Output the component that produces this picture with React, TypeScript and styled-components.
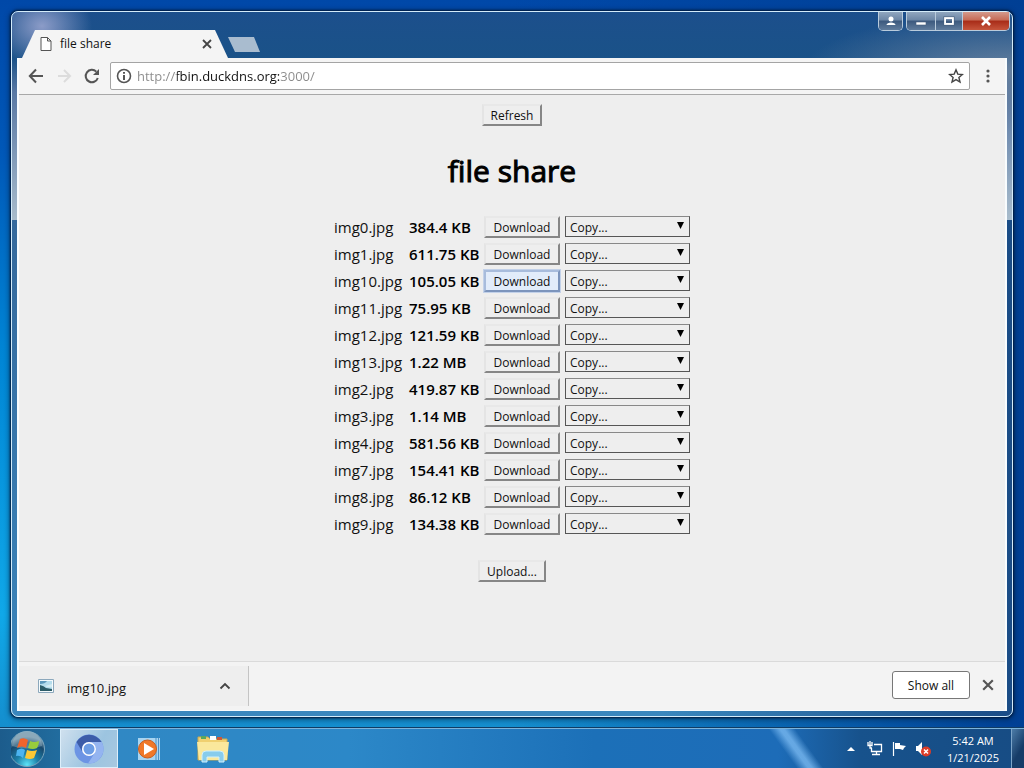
import React from "react";
import styled, { createGlobalStyle, css } from "styled-components";

const GlobalStyle = createGlobalStyle`
  *, *::before, *::after { box-sizing: border-box; }
  body { margin: 0; font-family: "Open Sans", "Noto Sans", sans-serif; color: #111; }
  button, input, select { font: inherit; color: inherit; }
`;

const bareButton = css`
  display: flex;
  align-items: center;
  justify-content: center;
  padding: 0;
  border: 0;
  background: none;
`;

const Desktop = styled.div`
  min-height: 100vh;
  display: flex;
  flex-direction: column;
  overflow: hidden;
  background:
    linear-gradient(90deg, transparent 50%, #003f94 100%),
    linear-gradient(180deg, #0048a8 0%, #0058b8 20%, #0084d4 45%, #10a8e8 80%, #1684c4 100%);
`;

const BrowserWindow = styled.main`
  flex: 1;
  display: flex;
  flex-direction: column;
  margin: 11px;
  padding: 0 5px 5px;
  border: 1px solid #d4ecfa;
  border-radius: 7px;
  background:
    linear-gradient(90deg, transparent 65%, #1a4c86 100%) 0 208px / 100% 100% no-repeat,
    linear-gradient(180deg, #35699c, #3c94cc) 0 208px / 100% 100% no-repeat,
    radial-gradient(ellipse 50px 40px at 30px 14px, #8c9cc8 0%, transparent 100%),
    radial-gradient(ellipse 210px 60px at 100% 60px, #68819f 0%, transparent 100%),
    linear-gradient(180deg, #1c4f8c 0, #1a5288 46px, #5878a4 80px, #a8bccc 208px);
  box-shadow: 0 0 2px 1px #001c40, 0 1px 5px 2px #00204088;
`;

const TitleBar = styled.header`
  height: 46px;
  display: flex;
  justify-content: space-between;
  align-items: flex-start;
  margin-right: -3px;
`;

const TabStrip = styled.div`
  display: flex;
  align-items: flex-end;
  height: 46px;
  padding-left: 5px;
`;

const Tab = styled.div`
  width: 206px;
  height: 28px;
  display: flex;
  align-items: center;
  padding: 0 15px 0 18px;
  gap: 8px;
  background: #f4f4f4;
  clip-path: polygon(13px 0, 193px 0, 206px 100%, 0 100%);
  font-size: 12px;
  line-height: 16px;
`;

const TabTitle = styled.span`
  flex: 1;
`;

const TabClose = styled.button`
  ${bareButton}
  width: 12px;
  height: 12px;
`;

const NewTab = styled.button`
  ${bareButton}
  width: 32px;
  height: 15px;
  margin-bottom: 6px;
  background: #a9bccf;
  clip-path: polygon(0 0, 26px 0, 32px 100%, 7px 100%);
`;

const WindowControls = styled.div`
  display: flex;
  gap: 3px;
`;

const ControlGroup = styled.div`
  display: flex;
  height: 19px;
  border: 1px solid #b9cbdc;
  border-top: 0;
  border-radius: 0 0 5px 5px;
  overflow: hidden;
`;

const ControlButton = styled.button<{ $width: number; $close?: boolean }>`
  ${bareButton}
  width: ${(p) => p.$width}px;
  height: 18px;
  background: ${(p) =>
    p.$close
      ? "linear-gradient(#d39a8c 0, #c66a55 45%, #a82c18 50%, #c6553c 100%)"
      : "linear-gradient(#90a6bf 0, #6c86a5 45%, #3c597e 50%, #607c9c 100%)"};
  & + & { border-left: 1px solid #b9cbdc; }
`;

const Client = styled.div`
  flex: 1;
  display: flex;
  flex-direction: column;
  border: solid #f8fcfe;
  border-width: 0 2px 1px;
  background: #eee;
`;

const Toolbar = styled.nav`
  height: 37px;
  display: flex;
  align-items: center;
  padding: 0 9px 0 3px;
  background: #f4f4f4;
  border-bottom: 1px solid #a8a8a8;
`;

const ToolButton = styled.button`
  ${bareButton}
  width: 28px;
  height: 28px;
`;

const AddressBar = styled.div`
  flex: 1;
  height: 28px;
  display: flex;
  align-items: center;
  gap: 5px;
  margin: 0 10px 0 4px;
  padding: 0 5px;
  background: #fff;
  border: 1px solid #a4a4a4;
  border-radius: 2px;
`;

const AddressInput = styled.input`
  flex: 1;
  min-width: 0;
  height: 24px;
  padding: 0;
  border: 0;
  outline: 0;
  font-size: 13px;
  color: #222;
  background: linear-gradient(90deg, #8a8a8a 40px, #111 40px, #111 143px, #8a8a8a 143px);
  background-clip: text;
  -webkit-text-fill-color: transparent;
`;

const IconButton = styled.button`
  ${bareButton}
  width: 16px;
  height: 20px;
`;

const Page = styled.section`
  flex: 1;
  display: flex;
  flex-direction: column;
  align-items: center;
  padding: 9px 8px;
`;

const PageButton = styled.button<{ $width: number; $focused?: boolean }>`
  display: block;
  width: ${(p) => p.$width}px;
  height: 22px;
  padding: 2px 0 0;
  font-size: 12px;
  line-height: 16px;
  background: ${(p) => (p.$focused ? "#e2ecfa" : "#eee")};
  border: 2px solid;
  border-color: ${(p) => (p.$focused ? "#a8bcdc #7c94bc #7c94bc #a8bcdc" : "#e8e8e8 #868686 #868686 #e4e4e4")};
  box-shadow: ${(p) => (p.$focused ? "0 0 0 1px #9cb8e488" : "none")};
`;

const Heading = styled.h1`
  margin: 22px 0 18px;
  font-size: 30px;
  line-height: 46px;
  font-weight: 400;
  color: #000;
  -webkit-text-stroke: 1px #000;
`;

const FileTable = styled.table`
  border-spacing: 2px;
  margin-bottom: 22px;
  font-size: 15px;
  line-height: 20px;
  td { height: 25px; padding: 1px; white-space: nowrap; }
`;

const FileName = styled.td`
  width: 73px;
`;

const FileSize = styled.td`
  width: 73px;
  font-weight: 600;
  color: #000;
`;

const SelectBox = styled.div`
  display: grid;
  width: 125px;
  margin-left: 1px;
  align-items: center;
  & > * { grid-area: 1 / 1; }
  & > svg { justify-self: end; margin: 0 6px 2px 0; pointer-events: none; }
`;

const CopySelect = styled.select`
  appearance: none;
  width: 100%;
  height: 21px;
  padding: 2px 4px 0;
  border: 1px solid #555;
  border-top-color: #888;
  border-radius: 0;
  background: #eee;
  font-size: 12px;
  line-height: 17px;
`;

const Shelf = styled.footer`
  height: 49px;
  display: flex;
  align-items: center;
  border-top: 1px solid #dadada;
  background: #f3f3f3;
`;

const ShelfItem = styled.button`
  ${bareButton}
  width: 230px;
  height: 40px;
  padding: 0 17px 0 19px;
  gap: 13px;
  justify-content: flex-start;
  background: #eee;
  border-right: 1px solid #c4c4c4;
  font-size: 13px;
  line-height: 18px;
  span { flex: 1; padding-top: 4px; text-align: left; }
`;

const ShelfActions = styled.div`
  display: flex;
  align-items: center;
  gap: 10px;
  margin-left: auto;
  padding: 0 9px 2px 0;
`;

const ShowAll = styled.button`
  width: 78px;
  height: 28px;
  padding: 0;
  border: 1px solid #777;
  border-radius: 3px;
  background: #fff;
  font-size: 12px;
`;

const Taskbar = styled.footer`
  height: 40px;
  display: flex;
  align-items: stretch;
  border-top: 1px solid #7cb4dc;
  box-shadow: 0 -1px 0 #103c64;
  background:
    linear-gradient(54deg, transparent 0 38%, #78b8f0cc 49% 53%, transparent 64%) calc(100% - 192px) 0 / 74px 100% no-repeat,
    linear-gradient(90deg, #1c5c8c 0, #216c9e 58px, #3088c4 120px, #2c88c8 34%, #1c70b8 58%, #1d6cb8 76%, #17528c 84%, #174c84 100%);
`;

const TaskButton = styled.button<{ $width: number; $active?: boolean }>`
  ${bareButton}
  width: ${(p) => p.$width}px;
  ${(p) =>
    p.$active &&
    css`
      border: 1px solid #dceefa;
      background: linear-gradient(120deg, #cfe0ee, #9cc4e0 60%, #a8c8e0);
    `}
`;

const Tray = styled.div`
  display: flex;
  align-items: center;
  margin-left: auto;
`;

const TrayButton = styled.button`
  ${bareButton}
  width: 24px;
  height: 24px;
`;

const Clock = styled.time`
  width: 76px;
  font-size: 11px;
  line-height: 17px;
  text-align: center;
  color: #fff;
`;

const ShowDesktop = styled.button`
  width: 13px;
  align-self: stretch;
  padding: 0;
  border: 1px solid #7ca4c8;
  border-width: 0 0 0 1px;
  background: linear-gradient(120deg, #4c7ca8, #163c68 60%);
`;

const Cross = ({ size, width, color }: { size: number; width: number; color: string }) => (
  <svg width={size} height={size} viewBox="0 0 10 10" stroke={color} strokeWidth={width}>
    <path d="M1 1L9 9M9 1L1 9" />
  </svg>
);

const files = [
  ["img0.jpg", "384.4 KB"],
  ["img1.jpg", "611.75 KB"],
  ["img10.jpg", "105.05 KB"],
  ["img11.jpg", "75.95 KB"],
  ["img12.jpg", "121.59 KB"],
  ["img13.jpg", "1.22 MB"],
  ["img2.jpg", "419.87 KB"],
  ["img3.jpg", "1.14 MB"],
  ["img4.jpg", "581.56 KB"],
  ["img7.jpg", "154.41 KB"],
  ["img8.jpg", "86.12 KB"],
  ["img9.jpg", "134.38 KB"],
];

const FileRow = ({ name, size }: { name: string; size: string }) => (
  <tr>
    <FileName>{name}</FileName>
    <FileSize>{size}</FileSize>
    <td>
      <PageButton $width={76} $focused={name === "img10.jpg"}>Download</PageButton>
    </td>
    <td>
      <SelectBox>
        <CopySelect aria-label={`Copy ${name}`}>
          <option>Copy...</option>
        </CopySelect>
        <svg width="7" height="7" viewBox="0 0 7 7"><path d="M0 0H7L3.500 7Z" /></svg>
      </SelectBox>
    </td>
  </tr>
);

export default function App() {
  return (
    <Desktop>
      <GlobalStyle />
      <BrowserWindow>
        <TitleBar>
          <TabStrip>
            <Tab>
              <svg width="12" height="14" viewBox="0 0 12 14" fill="#fff" stroke="#555">
                <path d="M1 .5H7.500L11 4V13.500H1ZM7.500 .5V4H11" />
              </svg>
              <TabTitle>file share</TabTitle>
              <TabClose aria-label="Close tab"><Cross size={10} width={1.8} color="#444" /></TabClose>
            </Tab>
            <NewTab aria-label="New tab" />
          </TabStrip>
          <WindowControls>
            <ControlGroup>
              <ControlButton $width={23} aria-label="Profile">
                <svg width="10" height="10" viewBox="0 0 10 10" fill="#fff">
                  <circle cx="5" cy="3" r="2.500" /><path d="M0.500 9C.5 5.500 9.500 5.500 9.500 9Z" />
                </svg>
              </ControlButton>
            </ControlGroup>
            <ControlGroup>
              <ControlButton $width={28} aria-label="Minimize">
                <svg width="12" height="10" viewBox="0 0 12 10"><path d="M1 6H11V9H1Z" fill="#fff" stroke="#47607c" strokeWidth=".6" /></svg>
              </ControlButton>
              <ControlButton $width={27} aria-label="Maximize">
                <svg width="12" height="10" viewBox="0 0 12 10" fill="none"><path d="M2 2H10V8H2Z" stroke="#fff" strokeWidth="2" /><path d="M.7.7H11.300V9.300H.7Z" stroke="#47607c" strokeWidth=".6" /></svg>
              </ControlButton>
              <ControlButton $width={47} $close aria-label="Close">
                <Cross size={10} width={2.6} color="#fff" />
              </ControlButton>
            </ControlGroup>
          </WindowControls>
        </TitleBar>
        <Client>
          <Toolbar>
            <ToolButton aria-label="Back">
              <svg width="16" height="16" viewBox="0 0 16 16" fill="none" stroke="#555" strokeWidth="2"><path d="M15 8H2M8 1.500L1.800 8L8 14.500" /></svg>
            </ToolButton>
            <ToolButton aria-label="Forward">
              <svg width="16" height="16" viewBox="0 0 16 16" fill="none" stroke="#dcdcdc" strokeWidth="2"><path d="M2 8H14M8 2L14 8L8 14" /></svg>
            </ToolButton>
            <ToolButton aria-label="Reload">
              <svg width="16" height="16" viewBox="0 0 16 16" fill="none" stroke="#555" strokeWidth="2"><path d="M13.800 10A6.200 6.200 0 1 1 12.300 3.600" /><path d="M15 1V7H9Z" fill="#555" stroke="none" /></svg>
            </ToolButton>
            <AddressBar>
              <IconButton aria-label="Site information">
                <svg width="16" height="16" viewBox="0 0 16 16" fill="none" stroke="#555" strokeWidth="1.600"><circle cx="8" cy="8" r="6.500" /><path d="M8 7V12M8 4V5.800" strokeWidth="2" /></svg>
              </IconButton>
              <AddressInput aria-label="Address" defaultValue="http://fbin.duckdns.org:3000/" />
              <IconButton aria-label="Bookmark">
                <svg width="16" height="16" viewBox="0 0 16 16" fill="none" stroke="#444" strokeWidth="1.400"><path d="M8 1.800L9.800 6.100L14.400 6.500L10.900 9.500L12 14L8 11.600L4 14L5.100 9.500L1.600 6.500L6.200 6.100Z" /></svg>
              </IconButton>
            </AddressBar>
            <IconButton aria-label="Menu">
              <svg width="4" height="14" viewBox="0 0 4 14" fill="#555"><circle cx="2" cy="2" r="1.600" /><circle cx="2" cy="7" r="1.600" /><circle cx="2" cy="12" r="1.600" /></svg>
            </IconButton>
          </Toolbar>
          <Page>
            <PageButton $width={60}>Refresh</PageButton>
            <Heading>file share</Heading>
            <FileTable>
              <tbody>
                {files.map(([name, size]) => <FileRow key={name} name={name} size={size} />)}
              </tbody>
            </FileTable>
            <PageButton $width={68}>Upload...</PageButton>
          </Page>
          <Shelf>
            <ShelfItem>
              <svg width="16" height="14" viewBox="0 0 16 14">
                <path d="M.5.5H15.500V13.500H.5Z" fill="#f4fafc" stroke="#8ca8bc" />
                <path d="M2 2H14V12H2Z" fill="#b4dcec" /><path d="M2 2H9Q7 5 2 5Z" fill="#5c98bc" />
                <path d="M2 6Q6 7 8 9L14 10V12H2Z" fill="#2c5c68" /><path d="M7 7L14 5V8Q10 9 7 7Z" fill="#d4ecf2" />
              </svg>
              <span>img10.jpg</span>
              <svg width="12" height="8" viewBox="0 0 12 8" fill="none" stroke="#444" strokeWidth="1.800"><path d="M1.500 6.500L6 2L10.500 6.500" /></svg>
            </ShelfItem>
            <ShelfActions>
              <ShowAll>Show all</ShowAll>
              <IconButton aria-label="Close downloads"><Cross size={12} width={1.8} color="#555" /></IconButton>
            </ShelfActions>
          </Shelf>
        </Client>
      </BrowserWindow>
      <Taskbar>
        <TaskButton $width={60} aria-label="Start">
          <svg width="38" height="38" viewBox="0 0 38 38">
            <defs>
              <radialGradient id="orb" cx=".5" cy=".95" r=".8"><stop offset="0" stopColor="#5ce4f8" /><stop offset=".4" stopColor="#1c80a8" /><stop offset=".8" stopColor="#18486c" /><stop offset="1" stopColor="#7898ac" /></radialGradient>
            </defs>
            <circle cx="16" cy="19" r="17.500" fill="url(#orb)" stroke="#78a4bc" />
            <path d="M1 16A15 15 0 0 1 31 16Q16 21 1 16Z" fill="#a8c4d0" opacity=".4" />
            <path d="M9 9Q13 7 17 10L15 18Q11 15 6 18Z" fill="#f0642c" />
            <path d="M19 11Q23 13 28 11Q28 15 26 18Q22 20 17 18Z" fill="#98cc3c" />
            <path d="M6 20Q11 17 14 20L12 28Q9 25 5 26Z" fill="#4cb4f0" />
            <path d="M16 20Q21 22 26 20L23 28Q19 30 14 28Z" fill="#fcc834" />
          </svg>
        </TaskButton>
        <TaskButton $width={58} $active aria-label="Chromium">
          <svg width="30" height="30" viewBox="0 0 30 30">
            <circle cx="15" cy="15" r="14.500" fill="#6c94e4" />
            <path d="M2.500 8A14.500 14.500 0 0 1 27.600 8H15A7 7 0 0 0 8.500 18Z" fill="#3c5ca8" />
            <path d="M27.600 8A14.500 14.500 0 0 1 14 29.500L21 18.500A7 7 0 0 0 15 8Z" fill="#94b4f0" />
            <circle cx="15" cy="15" r="7" fill="#fff" /><circle cx="15" cy="15" r="5.500" fill="#6c9ce4" />
          </svg>
        </TaskButton>
        <TaskButton $width={62} aria-label="Media player">
          <svg width="24" height="24" viewBox="0 0 24 24">
            <path d="M1 1H23V23H1Z" fill="#a8d4f0" /><path d="M19 1V23M21.500 1V23" stroke="#4890c8" />
            <circle cx="10.500" cy="12" r="9" fill="#f07828" stroke="#c85c1c" /><path d="M7 6L17 12L7 18Z" fill="#fff" />
          </svg>
        </TaskButton>
        <TaskButton $width={66} aria-label="File explorer">
          <svg width="34" height="30" viewBox="0 0 34 30">
            <path d="M2 3H12L14 5H31V26H2Z" fill="#f0d070" stroke="#c8a850" />
            <path d="M5 2H10V5H5Z" fill="#58a860" /><path d="M14 2H20V6H14Z" fill="#fff" /><path d="M21 3H26V6H21Z" fill="#cc5838" />
            <path d="M1 8H33L31 26H3Z" fill="#fae89c" />
            <path d="M6 28V21Q6 17 10 17H24Q28 17 28 21V28H23V23H11V28Z" fill="#88ccec" stroke="#d0f0fc" />
          </svg>
        </TaskButton>
        <Tray>
          <TrayButton aria-label="Show hidden icons">
            <svg width="8" height="4" viewBox="0 0 8 4"><path d="M4 0L8 4H0Z" fill="#fff" /></svg>
          </TrayButton>
          <TrayButton aria-label="Network">
            <svg width="16" height="15" viewBox="0 0 16 15" fill="none" stroke="#fff"><path d="M7 3.500H14.500V10.500H4.500V7M5 13.500H13M9.500 11V13M1 1V4.500H5V1M3 0V7H5" strokeWidth="1.300" /></svg>
          </TrayButton>
          <TrayButton aria-label="Action center">
            <svg width="16" height="16" viewBox="0 0 16 16"><path d="M2.500 1V15" stroke="#fff" strokeWidth="1.200" /><path d="M4 2H9V4L15 5L13 7L12 9L9 8H4Z" fill="#fff" /></svg>
          </TrayButton>
          <TrayButton aria-label="Volume muted">
            <svg width="16" height="16" viewBox="0 0 16 16"><path d="M1 5H3L7 1V14L3 10H1Z" fill="#fff" /><circle cx="11" cy="10.500" r="5" fill="#dc3c28" /><path d="M9 8.500L13 12.500M13 8.500L9 12.500" stroke="#fff" strokeWidth="1.500" /></svg>
          </TrayButton>
          <Clock>5:42 AM<br />1/21/2025</Clock>
          <ShowDesktop aria-label="Show desktop" />
        </Tray>
      </Taskbar>
    </Desktop>
  );
}
